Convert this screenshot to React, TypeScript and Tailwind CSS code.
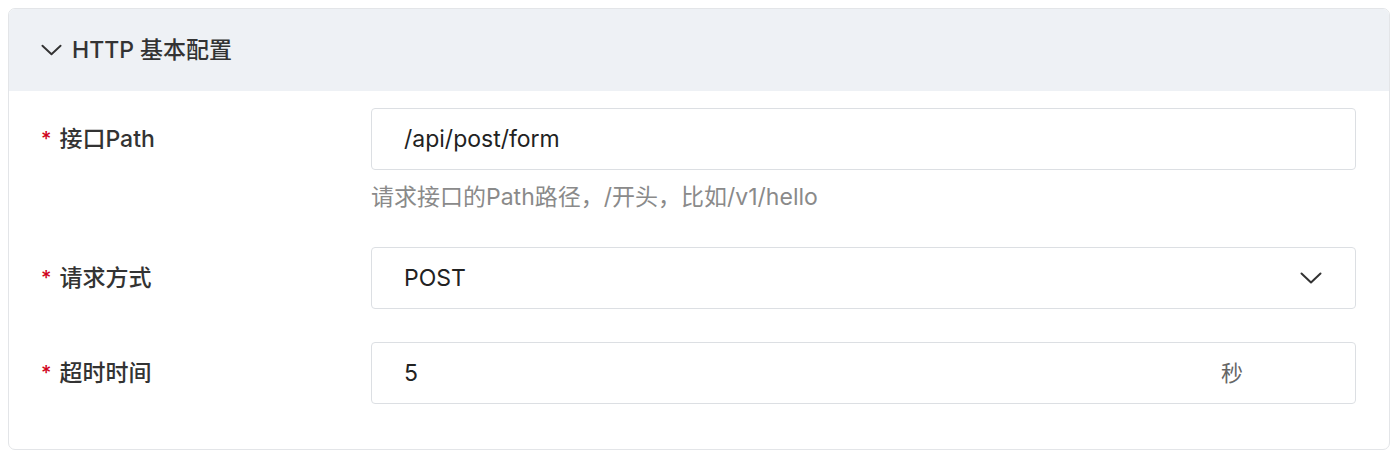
import React from "react";

const font = { fontFamily: 'Inter, "Noto Sans CJK SC", sans-serif' };

const Chevron = ({ className }: { className?: string }) => (
  <svg viewBox="0 0 22 12" className={className} fill="none" stroke="currentColor" strokeWidth={2} strokeLinecap="round" strokeLinejoin="round">
    <path d="M1.5 1.5 L11 10.5 L20.5 1.5" />
  </svg>
);

const Label = ({ text }: { text: string }) => (
  <div className="w-[330px] shrink-0 flex items-center text-[23px] text-[#333] font-medium">
    <span className="text-[#d0021b] mr-[8px] text-[20px] leading-none">*</span>
    {text}
  </div>
);

export default function App() {
  return (
    <div className="bg-white w-[1400px] h-[463px] pt-[8px] pl-[8px]" style={font}>
      <div className="w-[1382px] h-[442px] border border-[#e3e5e8] rounded-[7px] overflow-hidden">
        {/* header */}
        <div className="h-[82px] bg-[#eef1f5] flex items-center pl-[32px] gap-[10px] text-[#333]">
          <Chevron className="w-[21px] h-[12px]" />
          <span className="text-[23px] font-medium">HTTP 基本配置</span>
        </div>

        {/* form */}
        <div className="pt-[17px] pl-[32px] pr-[33px]">
          <div className="flex items-center">
            <Label text="接口Path" />
            <div className="flex-1 h-[62px] border border-[#dcdfe3] rounded-[4px] flex items-center pl-[32px] text-[23px] text-[#222]">
              /api/post/form
            </div>
          </div>
          <div className="ml-[330px] mt-[12px] mb-[35px] h-[30px] flex items-center text-[23px] text-[#8a8a8a]">
            请求接口的Path路径，/开头，比如/v1/hello
          </div>

          <div className="flex items-center">
            <Label text="请求方式" />
            <div className="flex-1 h-[62px] border border-[#dcdfe3] rounded-[4px] flex items-center justify-between pl-[32px] pr-[33px] text-[23px] text-[#222]">
              <span>POST</span>
              <Chevron className="w-[22px] h-[12px] text-[#333]" />
            </div>
          </div>

          <div className="flex items-center mt-[33px]">
            <Label text="超时时间" />
            <div className="flex-1 h-[62px] border border-[#dcdfe3] rounded-[4px] flex items-center justify-between pl-[32px] pr-[112px] text-[23px] text-[#222]">
              <span>5</span>
              <span className="text-[#666] text-[22px]">秒</span>
            </div>
          </div>
        </div>
      </div>
    </div>
  );
}
